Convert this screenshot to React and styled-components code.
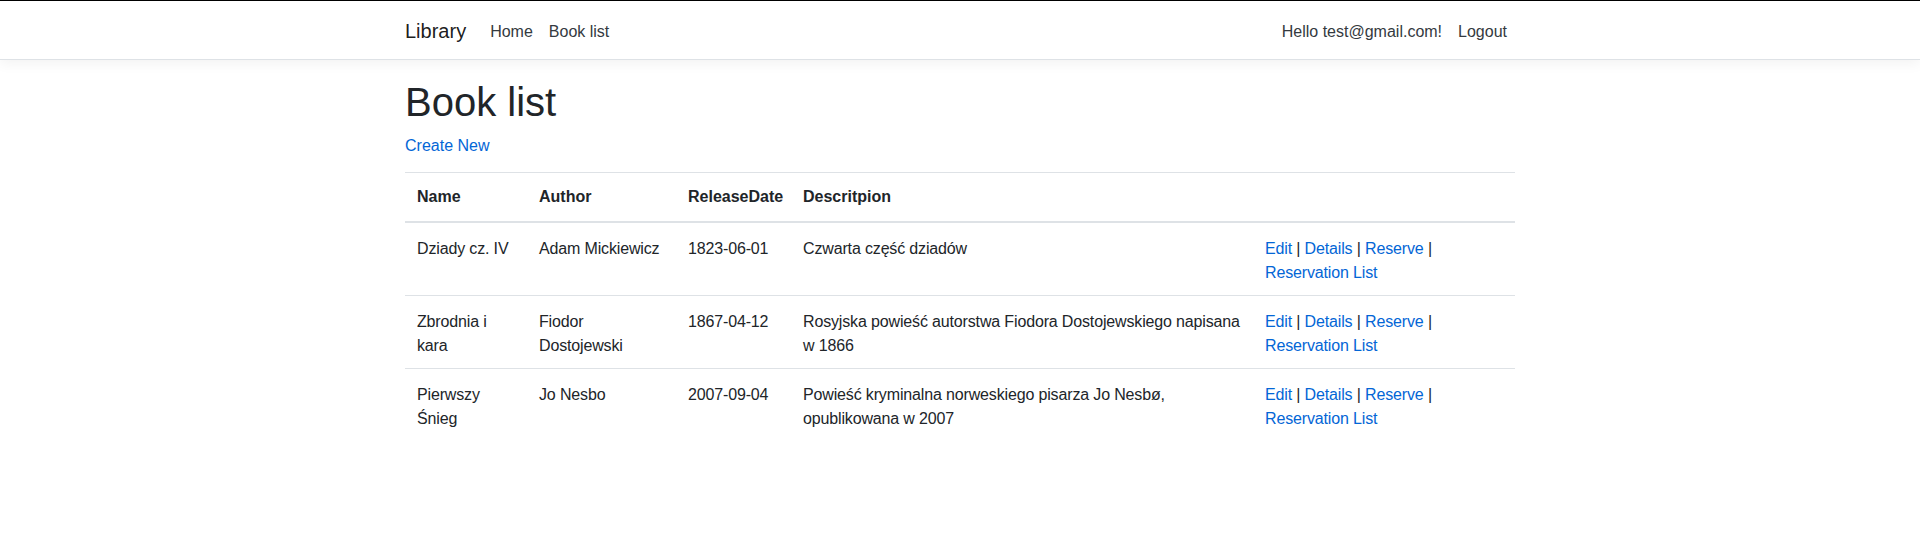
import React from "react"
import styled, { createGlobalStyle } from "styled-components"

const GlobalStyle = createGlobalStyle`
  html, body {
    margin: 0;
    padding: 0;
    background: #fff;
  }
  body {
    font-family: "Liberation Sans", Arial, sans-serif;
    font-size: 16px;
    line-height: 1.5;
    color: #212529;
  }
  * {
    box-sizing: border-box;
  }
`

const Page = styled.div`
  border-top: 1px solid #000;
  min-height: 537px;
`

const Navbar = styled.nav`
  background: #fff;
  border-bottom: 1px solid #dee2e6;
  box-shadow: 0 4px 12px rgba(0, 0, 0, 0.05);
  padding: 9px 0;
  margin-bottom: 16px;
`

const Container = styled.div`
  width: 100%;
  max-width: 1140px;
  margin: 0 auto;
  padding: 0 15px;
`

const NavInner = styled(Container)`
  display: flex;
  align-items: center;
`

const Brand = styled.a`
  font-size: 20px;
  line-height: 30px;
  padding: 6px 0 4px;
  margin-right: 16px;
  color: rgba(0, 0, 0, 0.9);
  text-decoration: none;
`

const NavList = styled.ul`
  display: flex;
  list-style: none;
  margin: 0;
  padding: 0;
  flex-grow: ${(p) => (p.$grow ? 1 : 0)};
`

const NavLink = styled.a`
  display: block;
  padding: 10px 8px 6px;
  color: #343a40;
  text-decoration: none;
`

const Title = styled.h1`
  font-size: 40px;
  font-weight: 400;
  line-height: 44px;
  padding-top: 4px;
  margin: 0 0 8px;
`

const Paragraph = styled.p`
  margin: 0 0 14px;
  padding-top: 2px;
`

const Link = styled.a`
  color: #0366d6;
  text-decoration: none;
`

const Table = styled.table`
  width: 100%;
  border-collapse: collapse;
  table-layout: fixed;
  margin-bottom: 16px;
`

const HeadCell = styled.th`
  width: ${(p) => (p.$width ? `${p.$width}px` : "auto")};
  padding: 12px;
  text-align: left;
  vertical-align: bottom;
  font-weight: 700;
  white-space: nowrap;
  border-top: 1px solid #dee2e6;
  border-bottom: 2px solid #dee2e6;
`

const Cell = styled.td`
  padding: 14px 12px 10px;
  vertical-align: top;
  letter-spacing: -0.15px;
  border-top: 1px solid #dee2e6;
`

const books = [
  {
    name: "Dziady cz. IV",
    author: "Adam Mickiewicz",
    date: "1823-06-01",
    description: "Czwarta część dziadów",
  },
  {
    name: "Zbrodnia i kara",
    author: "Fiodor Dostojewski",
    date: "1867-04-12",
    description: "Rosyjska powieść autorstwa Fiodora Dostojewskiego napisana w 1866",
  },
  {
    name: "Pierwszy Śnieg",
    author: "Jo Nesbo",
    date: "2007-09-04",
    description: "Powieść kryminalna norweskiego pisarza Jo Nesbø, opublikowana w 2007",
  },
]

const columns = [
  { label: "Name", width: 122 },
  { label: "Author", width: 149 },
  { label: "ReleaseDate", width: 115 },
  { label: "Descritpion", width: 462 },
  { label: "", width: null },
]

const App = () => {
  return (
    <Page>
      <GlobalStyle />
      <Navbar>
        <NavInner>
          <Brand href="#">Library</Brand>
          <NavList $grow>
            <li>
              <NavLink href="#">Home</NavLink>
            </li>
            <li>
              <NavLink href="#">Book list</NavLink>
            </li>
          </NavList>
          <NavList>
            <li>
              <NavLink href="#">Hello test@gmail.com!</NavLink>
            </li>
            <li>
              <NavLink href="#">Logout</NavLink>
            </li>
          </NavList>
        </NavInner>
      </Navbar>
      <Container as="main">
        <Title>Book list</Title>
        <Paragraph>
          <Link href="#">Create New</Link>
        </Paragraph>
        <Table>
          <thead>
            <tr>
              {columns.map((c, i) => (
                <HeadCell key={i} $width={c.width}>
                  {c.label}
                </HeadCell>
              ))}
            </tr>
          </thead>
          <tbody>
            {books.map((b) => (
              <tr key={b.name}>
                <Cell>{b.name}</Cell>
                <Cell>{b.author}</Cell>
                <Cell>{b.date}</Cell>
                <Cell>{b.description}</Cell>
                <Cell>
                  <Link href="#">Edit</Link> | <Link href="#">Details</Link> |{" "}
                  <Link href="#">Reserve</Link> |{" "}
                  <Link href="#">Reservation List</Link>
                </Cell>
              </tr>
            ))}
          </tbody>
        </Table>
      </Container>
    </Page>
  )
}

export default App
